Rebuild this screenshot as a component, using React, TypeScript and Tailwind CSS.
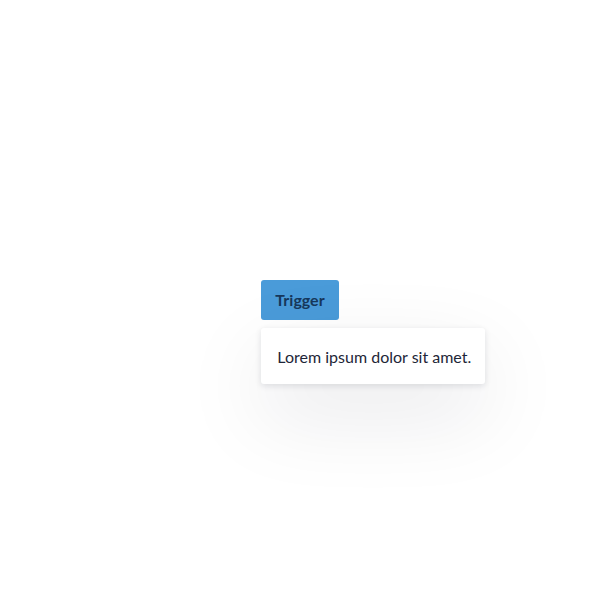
import React from "react";

export default function App() {
  return (
    <div
      className="flex h-[600px] w-[600px] items-center justify-center bg-white"
      style={{ fontFamily: "Lato, 'Open Sans', sans-serif" }}
    >
      <div className="relative">
        <button className="h-10 rounded-[3px] bg-[#4a9bd9] px-[14px] text-base font-bold text-[#17385c]">
          Trigger
        </button>

        {/* Popover */}
        <div className="absolute left-0 top-12 h-14 w-[224px] rounded-[3px] bg-white px-4 pt-[17px] text-base leading-6 whitespace-nowrap text-[#1e2638] shadow-[0_2px_6px_rgba(15,23,42,0.12),0_30px_85px_rgba(15,23,42,0.10)]">
          Lorem ipsum dolor sit amet.
        </div>
      </div>
    </div>
  );
}
